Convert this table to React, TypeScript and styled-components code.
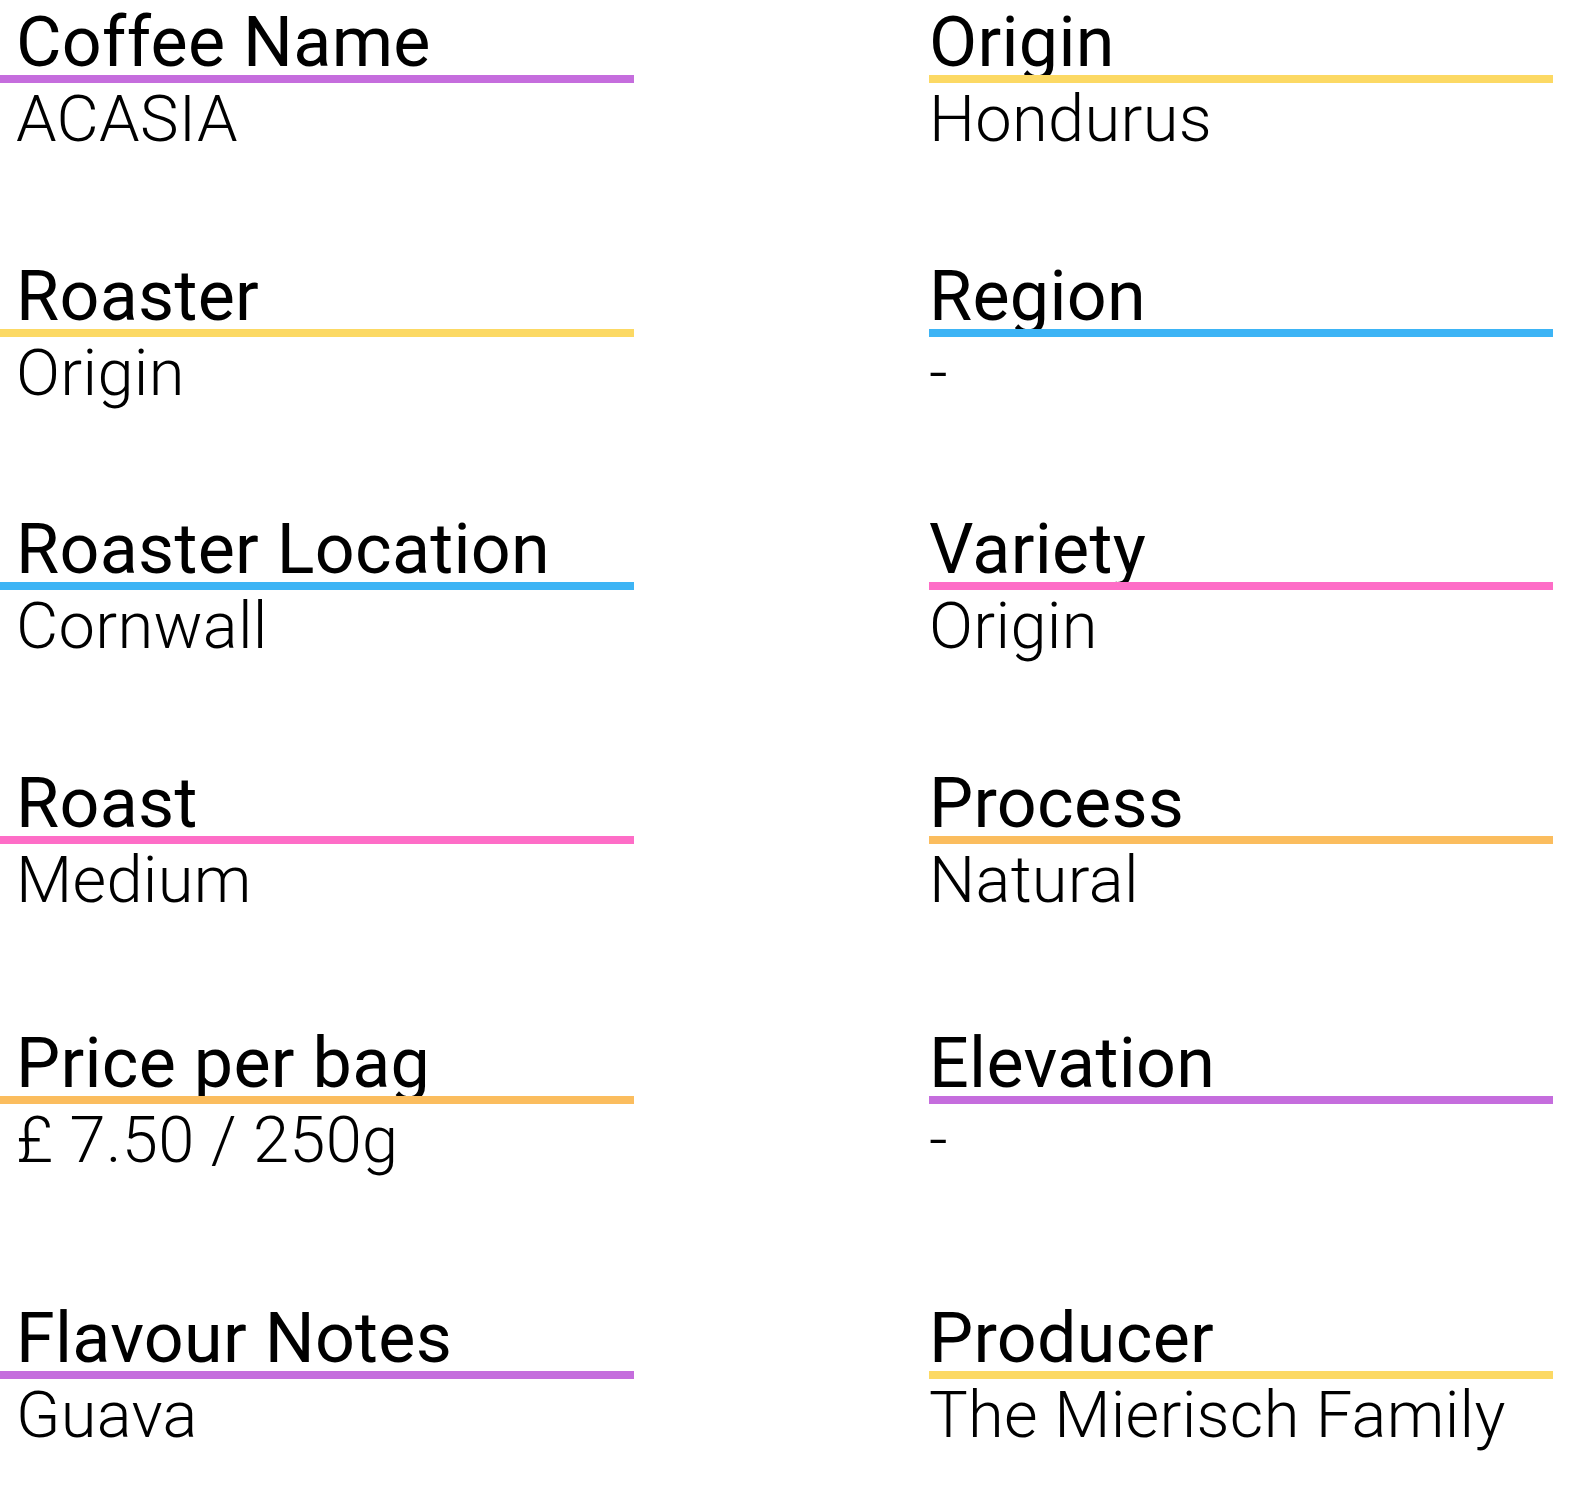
import styled, { createGlobalStyle } from "styled-components";

const GlobalStyle = createGlobalStyle`
  html, body { margin: 0; padding: 0; background: #fff; }
  body { font-family: Roboto, "Liberation Sans", Arial, sans-serif; color: #000; }
`;

const colors = {
    purple: "#c56ddd",
    yellow: "#fcd964",
    blue: "#3db4f5",
    pink: "#fe6dc7",
    orange: "#fbbd5e",
};

type Item = { label: string; value: string; color: string };

const rows: { top: number; left: Item; right: Item }[] = [
    {
        top: 9,
        left: { label: "Coffee Name", value: "ACASIA", color: colors.purple },
        right: { label: "Origin", value: "Hondurus", color: colors.yellow },
    },
    {
        top: 108,
        left: { label: "Roaster", value: "Origin", color: colors.yellow },
        right: { label: "Region", value: "-", color: colors.blue },
    },
    {
        top: 107,
        left: { label: "Roaster Location", value: "Cornwall", color: colors.blue },
        right: { label: "Variety", value: "Origin", color: colors.pink },
    },
    {
        top: 108,
        left: { label: "Roast", value: "Medium", color: colors.pink },
        right: { label: "Process", value: "Natural", color: colors.orange },
    },
    {
        top: 114,
        left: { label: "Price per bag", value: "£ 7.50 / 250g", color: colors.orange },
        right: { label: "Elevation", value: "-", color: colors.purple },
    },
    {
        top: 129,
        left: { label: "Flavour Notes", value: "Guava", color: colors.purple },
        right: { label: "Producer", value: "The Mierisch Family", color: colors.yellow },
    },
];

const Page = styled.main`
  display: flex;
  flex-direction: column;
  width: 1553px;
  padding-bottom: 60px;
`;

const Row = styled.section<{ $top: number }>`
  display: grid;
  grid-template-columns: 634px 624px;
  column-gap: 295px;
  margin-top: ${p => p.$top}px;
`;

const Field = styled.div<{ $inset: number }>`
  display: flex;
  flex-direction: column;
  --inset: ${p => p.$inset}px;
`;

const Label = styled.h2`
  margin: 0;
  padding-left: var(--inset);
  font-size: 70px;
  line-height: 66px;
  font-weight: 400;
  letter-spacing: 0.3px;
`;

const Rule = styled.div<{ $color: string }>`
  height: 8px;
  background: ${p => p.$color};
`;

const Value = styled.p`
  margin: 0;
  padding-left: var(--inset);
  font-size: 65px;
  line-height: 72px;
  font-weight: 300;
  letter-spacing: 0.3px;
`;

function Entry({ item, inset }: { item: Item; inset: number }) {
    return (
        <Field $inset={inset}>
            <Label>{item.label}</Label>
            <Rule $color={item.color} />
            <Value>{item.value}</Value>
        </Field>
    );
}

export default function App() {
    return (
        <>
            <GlobalStyle />
            <Page>
                {rows.map(r => (
                    <Row key={r.left.label} $top={r.top}>
                        <Entry item={r.left} inset={16} />
                        <Entry item={r.right} inset={0} />
                    </Row>
                ))}
            </Page>
        </>
    );
}
